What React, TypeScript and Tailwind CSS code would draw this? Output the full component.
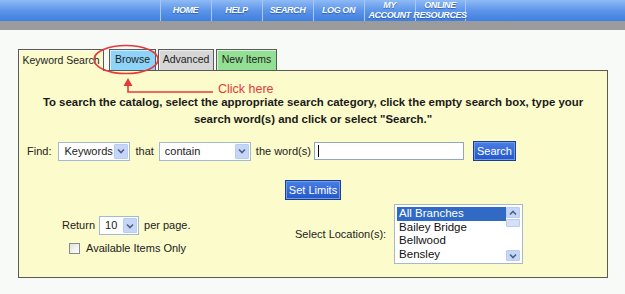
import type { ReactNode } from 'react'

const navItems: string[][] = [
  ['HOME'],
  ['HELP'],
  ['SEARCH'],
  ['LOG ON'],
  ['MY', 'ACCOUNT'],
  ['ONLINE', 'RESOURCES'],
]

const branches = ['All Branches', 'Bailey Bridge', 'Bellwood', 'Bensley']

function Chevron({ up = false }: { up?: boolean }) {
  return (
    <svg width="8" height="6" viewBox="0 0 8 6" className={up ? 'rotate-180' : ''}>
      <path d="M1 1.5 L4 4.5 L7 1.5" fill="none" stroke="#4d6185" strokeWidth="1.6" />
    </svg>
  )
}

function FakeSelect({ value, className }: { value: string; className: string }) {
  return (
    <div
      className={`flex h-[19px] items-stretch border border-[#a5b9d6] bg-white p-[1px] ${className}`}
    >
      <span className="flex-1 pl-[4px] leading-[15px]">{value}</span>
      <span className="flex w-[14px] items-center justify-center rounded-[1px] border border-[#b8cdf2] bg-[#c6d6f7]">
        <Chevron />
      </span>
    </div>
  )
}

function BlueButton({ children, className }: { children: ReactNode; className: string }) {
  return (
    <div
      className={`flex h-[20px] items-center justify-center border border-[#1d3f86] bg-gradient-to-b from-[#4a7fe6] to-[#2456c8] text-white shadow-[inset_0_0_0_1px_#6f9bf0] ${className}`}
    >
      {children}
    </div>
  )
}

function Tab({ label, className }: { label: string; className: string }) {
  return (
    <div
      className={`flex h-[22px] items-center justify-center border border-[#5a5a5a] text-[10.5px] text-[#222] shadow-[inset_1px_1px_0_#ffffff99] ${className}`}
    >
      {label}
    </div>
  )
}

export default function App() {
  return (
    <div className="relative min-h-screen w-[625px] bg-[#f8faf8] font-['Liberation_Sans',Arial,sans-serif] text-[11px] text-[#222]">
      <header>
        <div className="flex h-[21px] justify-center bg-gradient-to-b from-[#8fbaf5] via-[#5d95e9] to-[#3e7fe0]">
          {navItems.map((lines, i) => (
            <div
              key={i}
              className={`flex w-[51px] flex-col items-center justify-center border-l border-[#a9c8f3] text-[9px] font-bold italic leading-[9.5px] tracking-[-0.4px] text-white [text-shadow:0_1px_1px_#2c5fb0] ${i === navItems.length - 1 ? 'border-r' : ''}`}
            >
              {lines.map((line) => (
                <span key={line}>{line}</span>
              ))}
            </div>
          ))}
        </div>
        <div className="h-[9px] bg-[#9b9b9b]" />
      </header>

      <main className="pl-[18px] pt-[19px]">
        <div className="flex gap-[2px]">
          <Tab label="Keyword Search" className="z-10 w-[86px] border-b-0 bg-[#fbfbcb]" />
          <div className="w-[1px]" />
          <Tab label="Browse" className="w-[47px] bg-[#8ed3f8]" />
          <Tab label="Advanced" className="w-[56px] bg-[#d6d6d6]" />
          <Tab label="New Items" className="w-[61px] bg-[#93df93]" />
        </div>

        <section className="-mt-[1px] h-[208px] w-[590px] border border-[#5a5a5a] bg-[#fbfbcb] px-[8px] pt-[23px]">
          <p className="text-center text-[11.4px] font-bold leading-[17px] text-[#1a1a1a]">
            To search the catalog, select the appropriate search category, click the empty search box, type your
            <br />
            search word(s) and click or select "Search."
          </p>

          <div className="mt-[13px] flex h-[20px] items-center">
            <span>Find:</span>
            <FakeSelect value="Keywords" className="ml-[7px] w-[72px]" />
            <span className="ml-[5px]">that</span>
            <FakeSelect value="contain" className="ml-[5px] w-[92px]" />
            <span className="ml-[5px]">the word(s)</span>
            <div className="ml-[3px] h-[18px] w-[150px] border border-[#8fa6c6] bg-white">
              <div className="ml-[3px] mt-[2px] h-[12px] w-[1px] bg-black" />
            </div>
            <BlueButton className="ml-[9px] w-[43px]">Search</BlueButton>
          </div>

          <div className="mt-[19px] flex justify-center">
            <BlueButton className="w-[56px]">Set Limits</BlueButton>
          </div>

          <div className="mt-[4px] flex">
            <div className="mt-[12px] w-[268px] pl-[35px]">
              <div className="flex items-center">
                <span>Return</span>
                <FakeSelect value="10" className="ml-[4px] w-[40px]" />
                <span className="ml-[5px]">per page.</span>
              </div>
              <label className="ml-[7px] mt-[5px] flex items-center">
                <span className="h-[11px] w-[11px] border border-[#8a8a8a] bg-gradient-to-br from-[#e2e2dc] to-white" />
                <span className="ml-[6px]">Available Items Only</span>
              </label>
            </div>

            <div className="flex items-center">
              <span>Select Location(s):</span>
              <div className="ml-[8px] flex h-[60px] w-[129px] border border-[#a8b8cc] bg-white p-[2px]">
                <ul className="flex-1 text-[11.5px] leading-[13.5px]">
                  {branches.map((b, i) => (
                    <li
                      key={b}
                      className={`pl-[2px] ${i === 0 ? 'bg-[#316ac5] text-white' : 'text-[#111]'}`}
                    >
                      {b}
                    </li>
                  ))}
                </ul>
                <div className="flex w-[14px] flex-col">
                  <span className="flex h-[11px] items-center justify-center rounded-[1px] border border-[#b8cdf2] bg-[#c6d6f7]">
                    <Chevron up />
                  </span>
                  <span className="mt-[1px] h-[8px] rounded-[1px] border border-[#b8cdf2] bg-[#d3e0f8]" />
                  <span className="flex-1" />
                  <span className="flex h-[11px] items-center justify-center rounded-[1px] border border-[#b8cdf2] bg-[#c6d6f7]">
                    <Chevron />
                  </span>
                </div>
              </div>
            </div>
          </div>
        </section>
      </main>

      {/* annotation */}
      <svg className="pointer-events-none absolute left-0 top-0 z-20" width="625" height="294">
        <ellipse cx="126" cy="59.5" rx="32" ry="14" fill="none" stroke="#e63a3a" strokeWidth="1.6" />
        <path d="M128 83 L128 92 L213 92" fill="none" stroke="#e63a3a" strokeWidth="1.6" />
        <path d="M123.5 86 L128 78 L132.5 86 Z" fill="#e63a3a" />
      </svg>
      <span className="absolute left-[218px] top-[80px] z-20 text-[12.5px] text-[#e63a3a]">Click here</span>
    </div>
  )
}
